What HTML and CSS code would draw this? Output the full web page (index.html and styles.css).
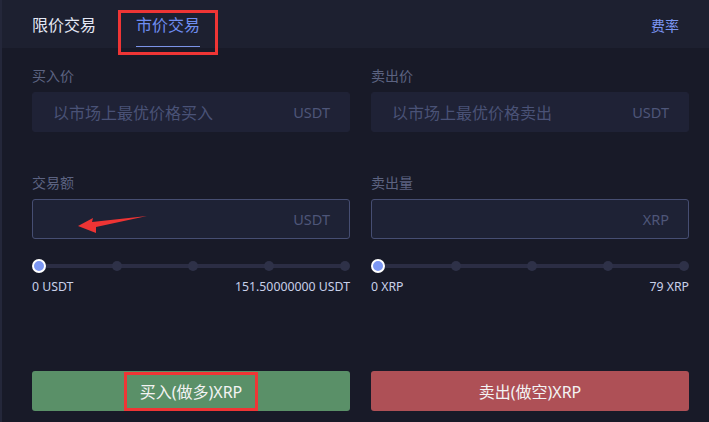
FILE: index.html
```html
<!DOCTYPE html>
<html lang="zh-CN">
<head>
<meta charset="utf-8">
<title>市价交易</title>
<link rel="stylesheet" href="styles.css">
</head>
<body>
<div class="panel">
  <div class="header">
    <div class="tabs">
      <div class="tab">限价交易</div>
      <div class="tab active">市价交易</div>
    </div>
    <div class="fee">费率</div>
  </div>
  <div class="columns">
    <div class="col">
      <div class="label">买入价</div>
      <div class="input disabled"><span class="ph">以市场上最优价格买入</span><span class="unit">USDT</span></div>
      <div class="label second">交易额</div>
      <div class="input"><span class="ph"></span><span class="unit">USDT</span></div>
      <div class="slider"><span class="dot first"></span><span class="dot"></span><span class="dot"></span><span class="dot"></span><span class="dot"></span></div>
      <div class="range"><span>0 USDT</span><span>151.50000000 USDT</span></div>
      <button class="btn buy">买入(做多)XRP</button>
    </div>
    <div class="col">
      <div class="label">卖出价</div>
      <div class="input disabled"><span class="ph">以市场上最优价格卖出</span><span class="unit">USDT</span></div>
      <div class="label second">卖出量</div>
      <div class="input"><span class="ph"></span><span class="unit">XRP</span></div>
      <div class="slider"><span class="dot first"></span><span class="dot"></span><span class="dot"></span><span class="dot"></span><span class="dot"></span></div>
      <div class="range"><span>0 XRP</span><span>79 XRP</span></div>
      <button class="btn sell">卖出(做空)XRP</button>
    </div>
  </div>
</div>
<div class="mark mark-tab"></div>
<div class="mark mark-btn"></div>
<svg class="arrow" width="80" height="24" viewBox="0 0 80 24">
  <polygon points="1,13 16,5 15,9 70,3 19,14 19,20" fill="#ee3434"/>
</svg>
</body>
</html>
```
FILE: styles.css
```css
* { box-sizing: border-box; }
html, body { margin: 0; padding: 0; }
body {
  width: 709px;
  height: 422px;
  overflow: hidden;
  background: #181a28;
  font-family: "Noto Sans", "Noto Sans CJK SC", sans-serif;
  position: relative;
}
.panel {
  height: 422px;
  border-left: 2px solid #24273a;
}
.header {
  height: 48px;
  background: #1d2030;
  display: flex;
  justify-content: space-between;
  padding: 0 30px 0 30px;
}
.tabs { display: flex; gap: 40px; }
.tab {
  display: flex;
  align-items: center;
  padding-top: 2px;
  font-size: 16px;
  color: #e4e8f5;
  border-bottom: 1px solid transparent;
  margin-bottom: 1px;
}
.tab.active { color: #6f8df0; border-bottom-color: #7b93e8; }
.fee {
  display: flex;
  align-items: center;
  padding-top: 2px;
  font-size: 14px;
  color: #7b95f0;
}
.columns {
  display: flex;
  gap: 21px;
  padding: 19px 20px 0 30px;
}
.col {
  width: 318px;
  display: flex;
  flex-direction: column;
}
.label {
  font-size: 14px;
  line-height: 18px;
  color: #5c6381;
  margin-bottom: 7px;
}
.label.second { margin-top: 42px; }
.input {
  height: 40px;
  border-radius: 3px;
  background: #1e2235;
  border: 1px solid #464e72;
  display: flex;
  align-items: center;
  justify-content: space-between;
  padding: 0 19px 0 20px;
  font-size: 14.5px;
  color: #4b5377;
}
.input.disabled { border-color: #1f2236; background: #1f2236; }
.ph { font-size: 16px; color: #4a5276; }
.unit { color: #4e5679; }
.slider {
  margin-top: 20px;
  height: 14px;
  display: flex;
  align-items: center;
  justify-content: space-between;
  background: linear-gradient(#2b2d44, #2b2d44) 7px center / calc(100% - 12px) 4px no-repeat;
}
.dot {
  width: 10px;
  height: 10px;
  border-radius: 50%;
  background: #2e3148;
}
.dot.first {
  width: 14px;
  height: 14px;
  background: #7c97f3;
  border: 2px solid #ffffff;
}
.range {
  margin-top: 6px;
  display: flex;
  justify-content: space-between;
  font-size: 12.3px;
  line-height: 16px;
  color: #c9d1ea;
}
.btn {
  margin-top: 76px;
  height: 40px;
  border: none;
  border-radius: 3px;
  font-family: inherit;
  font-size: 16px;
  color: #f3f3f3;
  padding: 0;
}
.btn.buy { background: #5a9068; }
.btn.sell { background: #ae5056; }
.mark {
  position: absolute;
  border: 3px solid #ef3535;
}
.mark-tab { left: 118px; top: 10px; width: 100px; height: 45px; }
.mark-btn { left: 124px; top: 372px; width: 134px; height: 39px; }
.arrow { position: absolute; left: 77px; top: 213px; }
```
